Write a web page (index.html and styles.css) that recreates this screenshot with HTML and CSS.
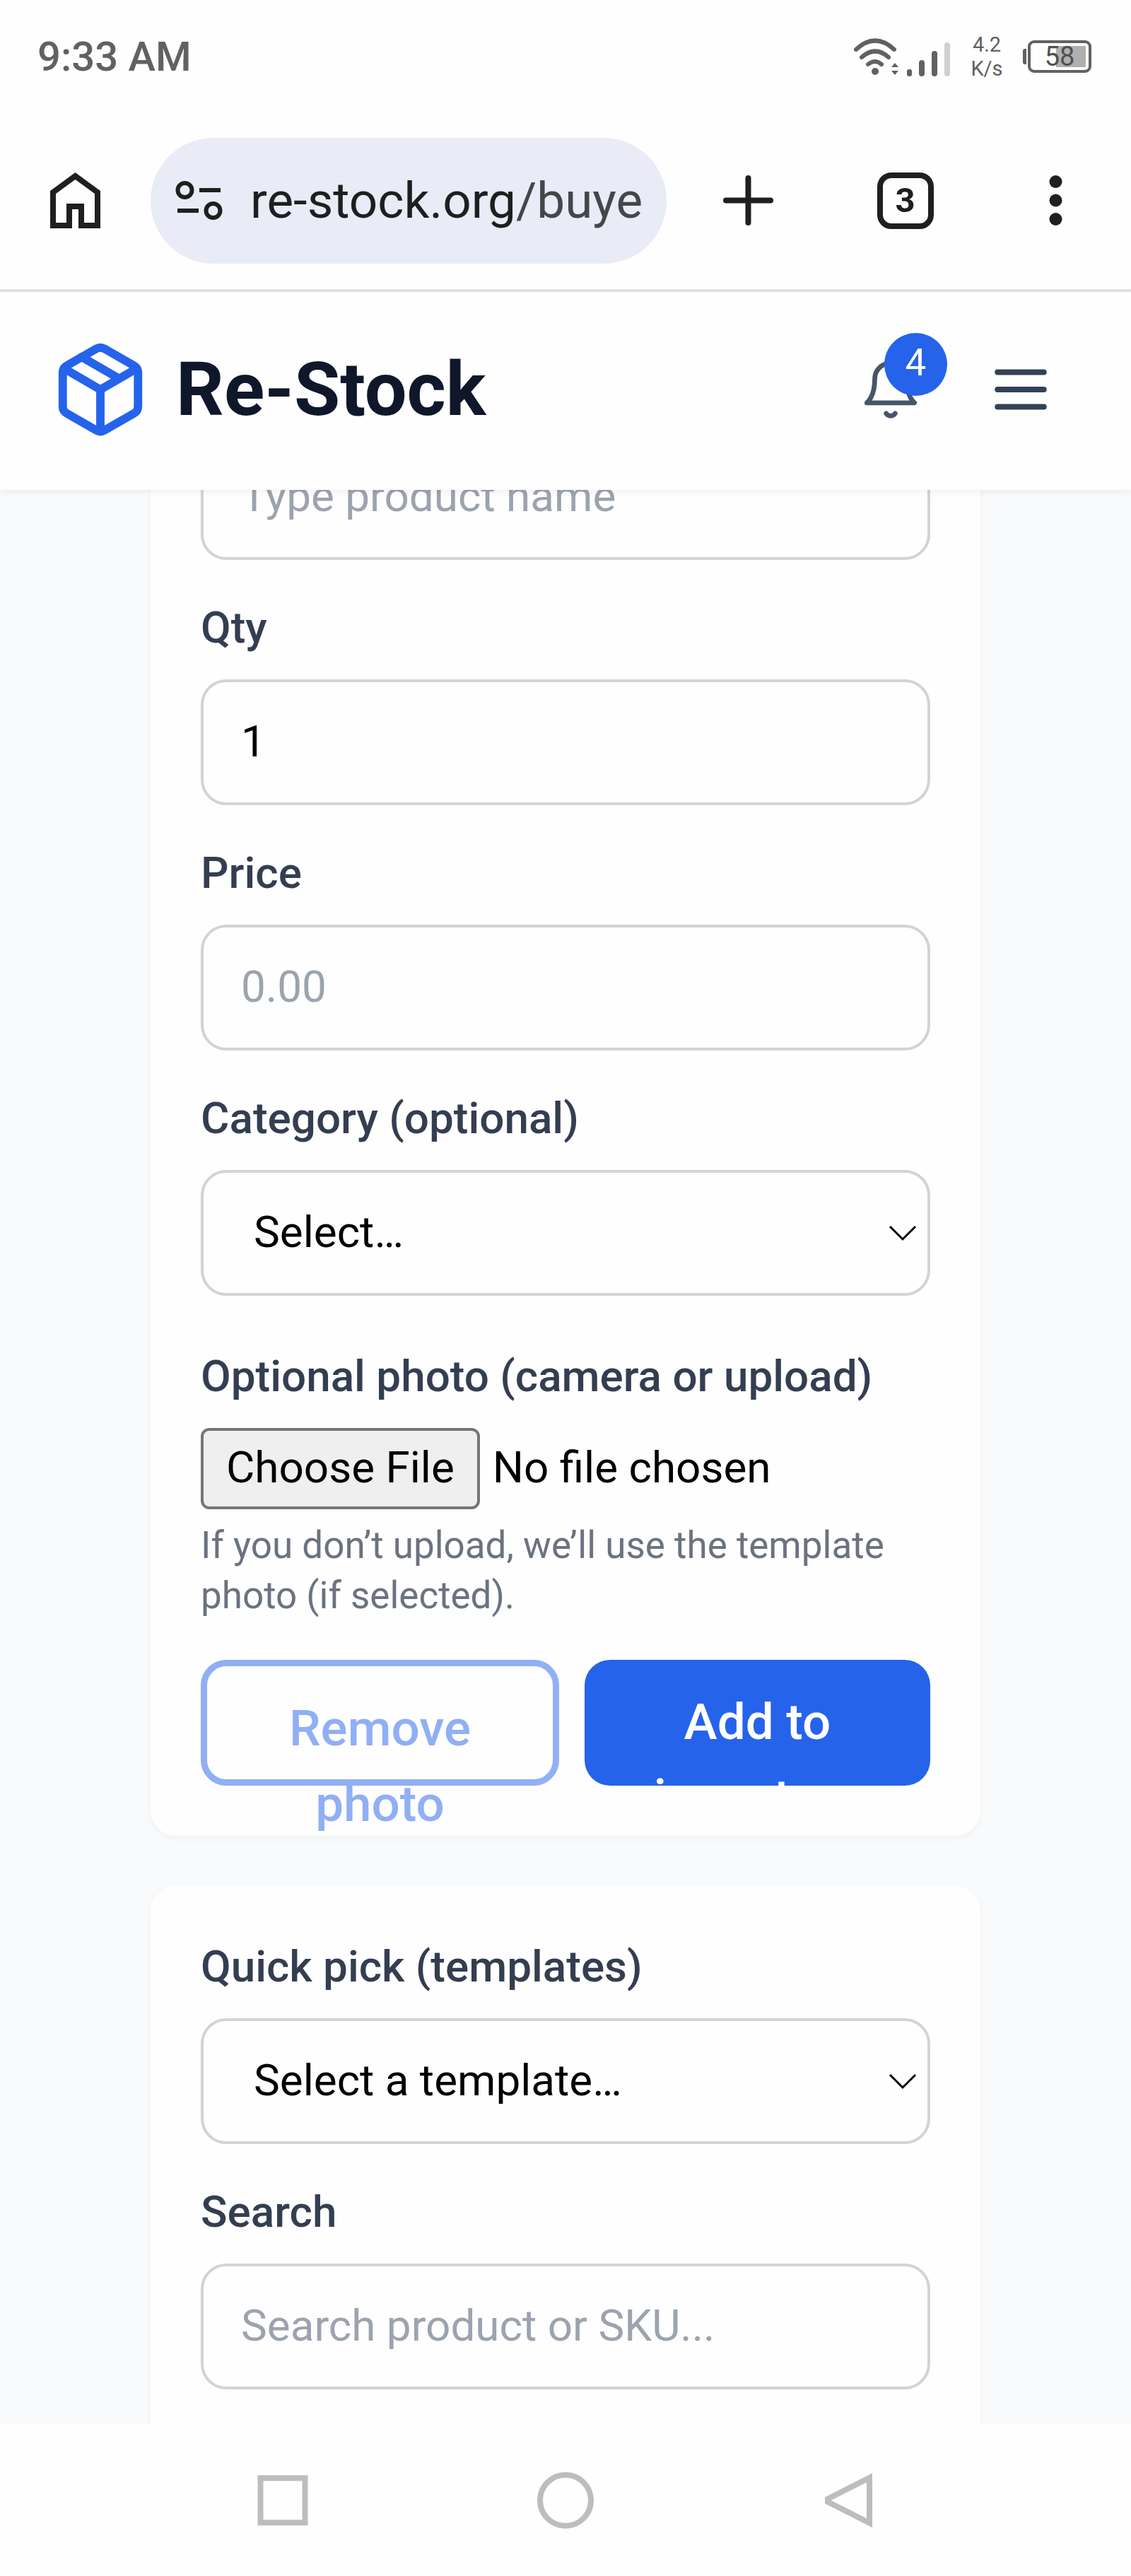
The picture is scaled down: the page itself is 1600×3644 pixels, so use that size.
FILE: index.html
```html
<!DOCTYPE html>
<html lang="en">
<head>
<meta charset="utf-8">
<meta name="viewport" content="width=device-width, initial-scale=1">
<title>Re-Stock</title>
<link rel="stylesheet" href="styles.css">
</head>
<body>
<div class="status-bar">
  <span class="clock">9:33 AM</span>
  <div class="status-icons">
    <svg class="signal" width="140" height="56" viewBox="0 0 140 56" aria-hidden="true">
      <g fill="none" stroke="#616161" stroke-width="6" stroke-linecap="round">
        <path d="M5 18Q32-7 59 18"/>
        <path d="M13 29Q32 12 51 29"/>
        <path d="M22 39Q32 31 41 39"/>
      </g>
      <circle cx="32" cy="49" r="5" fill="#616161"/>
      <path d="M55 43l5-6 5 6zM55 48l5 6 5-6z" fill="#616161"/>
      <rect x="77" y="46" width="7" height="10" rx="3" fill="#616161"/>
      <rect x="94" y="33" width="8" height="23" rx="4" fill="#616161"/>
      <rect x="112" y="20" width="8" height="36" rx="4" fill="#616161"/>
      <rect x="130" y="8" width="8" height="48" rx="4" fill="#cfcfcf"/>
    </svg>
    <span class="net-speed">4.2<br>K/s</span>
    <span class="battery"><span class="battery-level"></span><span class="battery-text">58</span></span>
  </div>
</div>

<div class="browser-bar">
  <button class="bar-button" type="button" aria-label="Home">
    <svg width="107" height="107" viewBox="0 0 107 107" fill="none" stroke="#1f1f1f" stroke-width="8">
      <path d="M22 89V42L53.500 19 85 42V89H62V62H45V89Z"/>
    </svg>
  </button>
  <div class="address">
    <svg class="site-info" width="68" height="58" viewBox="0 0 68 58" fill="none" stroke="#1f1f1f" stroke-width="6" aria-hidden="true">
      <circle cx="13.500" cy="14" r="10"/><path d="M34 14h30M3 43h30"/><circle cx="53.500" cy="43" r="10"/>
    </svg>
    <span class="url">re-stock.org<span class="path">/buye</span></span>
  </div>
  <button class="bar-button bar-button-wide" type="button" aria-label="New tab">
    <svg width="107" height="107" viewBox="0 0 107 107" stroke="#1f1f1f" stroke-width="8" stroke-linecap="round">
      <path d="M53.500 22v63M22 53.500h63"/>
    </svg>
  </button>
  <button class="bar-button" type="button" aria-label="Tabs"><span class="tab-count">3</span></button>
  <button class="bar-button" type="button" aria-label="Menu">
    <svg width="107" height="107" viewBox="0 0 107 107" fill="#1f1f1f">
      <circle cx="53.500" cy="27" r="9"/><circle cx="53.500" cy="53.500" r="9"/><circle cx="53.500" cy="80" r="9"/>
    </svg>
  </button>
</div>

<header class="app-header">
  <a class="brand" href="#">
    <svg width="142" height="142" viewBox="0 0 24 24" fill="none" stroke="#2563eb" stroke-width="2" stroke-linecap="round" stroke-linejoin="round" aria-hidden="true">
      <path d="M21 16V8a2 2 0 0 0-1-1.730l-7-4a2 2 0 0 0-2 0l-7 4A2 2 0 0 0 3 8v8a2 2 0 0 0 1 1.730l7 4a2 2 0 0 0 2 0l7-4A2 2 0 0 0 21 16z"/>
      <path d="M16.500 9.400 7.500 4.210M3.270 6.960 12 12.010l8.730-5.050M12 22.080V12"/>
    </svg>
    <span>Re-Stock</span>
  </a>
  <div class="header-actions">
    <button class="icon-button" type="button" aria-label="Notifications">
      <svg width="90" height="90" viewBox="0 0 24 24" fill="none" stroke="#475569" stroke-width="1.800" stroke-linecap="round" stroke-linejoin="round">
        <path d="M6 8a6 6 0 0 1 12 0c0 7 3 9 3 9H3s3-2 3-9M10.300 21a2 2 0 0 0 3.400 0"/>
      </svg>
      <span class="badge">4</span>
    </button>
    <button class="icon-button" type="button" aria-label="Open menu">
      <svg width="98" height="98" viewBox="0 0 24 24" stroke="#334155" stroke-width="2" stroke-linecap="round">
        <path d="M4 6h16M4 12h16M4 18h16"/>
      </svg>
    </button>
  </div>
</header>

<main class="content">
  <form class="card card-first">
    <div class="field">
      <input class="control" type="text" placeholder="Type product name" aria-label="Product name">
    </div>
    <div class="field">
      <label for="qty">Qty</label>
      <input class="control" id="qty" type="text" inputmode="numeric" value="1">
    </div>
    <div class="field">
      <label for="price">Price</label>
      <input class="control" id="price" type="text" inputmode="decimal" placeholder="0.00">
    </div>
    <div class="field">
      <label for="category">Category (optional)</label>
      <div class="select-wrap">
        <select class="control" id="category"><option>Select…</option></select>
        <svg class="chevron" width="40" height="24" viewBox="0 0 40 24" fill="none" stroke="#000" stroke-width="3" aria-hidden="true"><path d="M2 3l18 18L38 3"/></svg>
      </div>
    </div>
    <div class="field field-photo">
      <label for="photo">Optional photo (camera or upload)</label>
      <input class="file" id="photo" type="file" accept="image/*">
      <p class="hint">If you don’t upload, we’ll use the template photo (if selected).</p>
    </div>
    <div class="actions">
      <button class="button button-outline" type="button" disabled>Remove photo</button>
      <button class="button button-primary" type="button">Add to inventory</button>
    </div>
  </form>

  <section class="card card-last">
    <div class="field">
      <label for="template">Quick pick (templates)</label>
      <div class="select-wrap">
        <select class="control" id="template"><option>Select a template…</option></select>
        <svg class="chevron" width="40" height="24" viewBox="0 0 40 24" fill="none" stroke="#000" stroke-width="3" aria-hidden="true"><path d="M2 3l18 18L38 3"/></svg>
      </div>
    </div>
    <div class="field">
      <label for="search">Search</label>
      <input class="control" id="search" type="text" placeholder="Search product or SKU...">
    </div>
  </section>
</main>

<nav class="system-nav">
  <button class="nav-button" type="button" aria-label="Recent apps">
    <svg width="90" height="90" viewBox="0 0 90 90" fill="none" stroke="#bdbdbd" stroke-width="8"><rect x="13.500" y="13.500" width="63" height="63"/></svg>
  </button>
  <button class="nav-button" type="button" aria-label="Home screen">
    <svg width="90" height="90" viewBox="0 0 90 90" fill="none" stroke="#bdbdbd" stroke-width="8"><circle cx="45" cy="45" r="36"/></svg>
  </button>
  <button class="nav-button" type="button" aria-label="Back">
    <svg width="90" height="90" viewBox="0 0 90 90" fill="none" stroke="#bdbdbd" stroke-width="8"><path d="M75 13V77L16 47V43Z"/></svg>
  </button>
</nav>
</body>
</html>
```
FILE: styles.css
```css
* {
  box-sizing: border-box;
}

body {
  display: flex;
  flex-direction: column;
  min-height: 100vh;
  margin: 0;
  background: #f9fafb;
  font-family: Roboto, "Liberation Sans", sans-serif;
  font-size: 62px;
  line-height: 85px;
  color: #000;
}

button,
input,
select {
  font: inherit;
  color: inherit;
}

button {
  padding: 0;
  border: 0;
  background: none;
}

svg {
  display: block;
}

/* Phone status bar */
.status-bar {
  display: flex;
  align-items: center;
  justify-content: space-between;
  height: 160px;
  padding: 0 56px 0 53px;
  background: #fefefe;
  color: #616161;
}

.clock {
  font-size: 58px;
  font-weight: 500;
}

.status-icons {
  display: flex;
  align-items: center;
}

.net-speed {
  width: 100px;
  font-size: 29px;
  line-height: 34px;
  text-align: center;
}

.battery {
  position: relative;
  display: flex;
  align-items: center;
  justify-content: center;
  width: 90px;
  height: 46px;
  margin-left: 8px;
  border: 4px solid #616161;
  border-radius: 9px;
}

.battery::before {
  content: "";
  position: absolute;
  left: -11px;
  top: 8px;
  width: 5px;
  height: 22px;
  border-radius: 3px 0 0 3px;
  background: #616161;
}

.battery-level {
  position: absolute;
  top: 4px;
  right: 4px;
  bottom: 4px;
  width: 42px;
  background: #b0b0b0;
}

.battery-text {
  position: relative;
  font-size: 38px;
  line-height: 38px;
  color: #505050;
}

/* Browser toolbar */
.browser-bar {
  display: flex;
  align-items: center;
  height: 253px;
  padding: 0 0 2px;
  border-bottom: 4px solid #dee2e6;
  background: #fefefe;
}

.bar-button {
  display: flex;
  align-items: center;
  justify-content: center;
  width: 213px;
}

.bar-button-wide {
  width: 231px;
}

.address {
  display: flex;
  flex: 1;
  align-items: center;
  gap: 38px;
  min-width: 0;
  height: 178px;
  padding: 0 35px;
  border-radius: 89px;
  background: #e9ebf7;
  white-space: nowrap;
}

.site-info {
  flex: none;
}

.url {
  font-size: 71px;
  color: #1f1f1f;
}

.path {
  color: #44474a;
}

.tab-count {
  display: flex;
  align-items: center;
  justify-content: center;
  width: 80px;
  height: 80px;
  border: 8px solid #1f1f1f;
  border-radius: 20px;
  font-size: 49px;
  font-weight: 700;
  line-height: 49px;
  color: #1f1f1f;
}

/* App header */
.app-header {
  position: relative;
  z-index: 1;
  display: flex;
  align-items: center;
  justify-content: space-between;
  height: 280px;
  padding: 0 107px 4px 71px;
  background: #fefefe;
  box-shadow: 0 4px 9px rgba(0, 0, 0, 0.05);
}

.brand {
  display: flex;
  align-items: center;
  gap: 36px;
  font-size: 106px;
  font-weight: 700;
  color: #0f172a;
  text-decoration: none;
}

.header-actions {
  display: flex;
  align-items: center;
  gap: 90px;
}

.icon-button {
  position: relative;
}

.badge {
  position: absolute;
  left: 36px;
  top: -35px;
  width: 89px;
  height: 89px;
  border-radius: 50%;
  background: #2563eb;
  color: #fff;
  font-size: 53px;
  text-align: center;
}

/* Scrolled page content */
.content {
  display: flex;
  flex: 1;
  flex-direction: column;
  gap: 71px;
  margin-top: -79px;
  padding: 0 213px;
}

.card {
  display: flex;
  flex-direction: column;
  gap: 53px;
  padding: 71px;
  border-radius: 36px;
  background: #fefefe;
  box-shadow: 0 4px 9px rgba(0, 0, 0, 0.04);
}

.card-first {
  padding-top: 0;
  border-top-left-radius: 0;
  border-top-right-radius: 0;
}

.card-last {
  flex: 1;
  padding-bottom: 50px;
  border-bottom-left-radius: 0;
  border-bottom-right-radius: 0;
}

.field {
  display: flex;
  flex-direction: column;
}

.field label {
  margin-bottom: 31px;
  font-weight: 500;
  color: #343e51;
}

.field-photo {
  padding-top: 18px;
}

.control {
  width: 100%;
  height: 178px;
  padding: 0 53px 4px;
  border: 4px solid #d1d3d6;
  border-radius: 36px;
  background: #fefefe;
  outline: 0;
}

.control::placeholder {
  color: #9ca3af;
  opacity: 1;
}

.select-wrap {
  position: relative;
}

select.control {
  display: block;
  padding: 0 71px 4px;
  appearance: none;
}

.chevron {
  position: absolute;
  right: 19px;
  top: 77px;
  pointer-events: none;
}

.file {
  width: 100%;
  height: 115px;
}

.file::file-selector-button {
  height: 115px;
  margin: 0 18px 0 0;
  padding: 0 32px 4px;
  border: 4px solid #767676;
  border-radius: 12px;
  background: #efefef;
  font: inherit;
  color: #000;
}

.hint {
  margin: 16px 0 2px;
  font-size: 53px;
  line-height: 71px;
  color: #6b7280;
}

.actions {
  display: flex;
  gap: 36px;
}

.button {
  display: flex;
  flex: 1 1 0;
  align-items: flex-start;
  justify-content: center;
  height: 178px;
  padding: 34px 71px;
  border-radius: 36px;
  font-size: 71px;
  font-weight: 500;
  line-height: 107px;
  text-align: center;
}

.button-outline {
  border: 9px solid #2563eb;
  color: #2563eb;
  opacity: 0.5;
}

.button-primary {
  overflow: hidden;
  background: #2563eb;
  color: #fff;
}

/* Phone navigation bar */
.system-nav {
  position: relative;
  display: flex;
  align-items: center;
  justify-content: space-around;
  height: 214px;
  padding: 0 200px;
  background: #fefefe;
}
```
